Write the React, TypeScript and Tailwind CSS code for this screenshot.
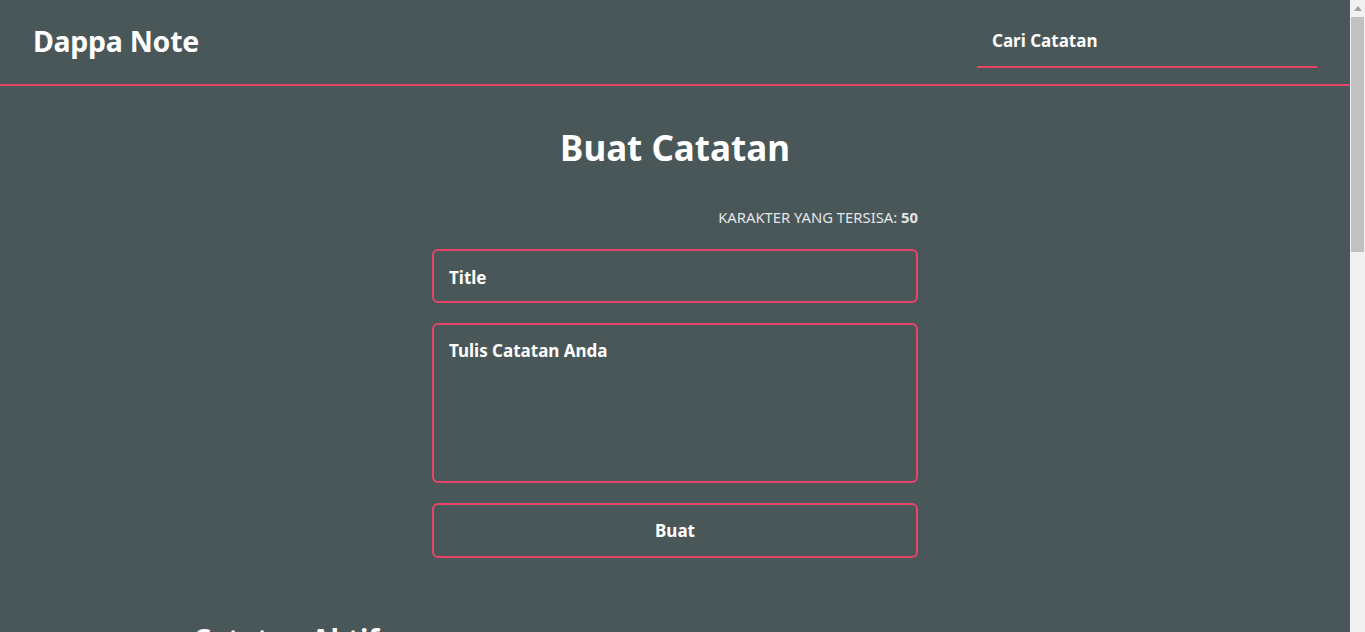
const notes = [
  { id: 1, title: "Babel", body: "Babel merupakan tools open-source yang digunakan untuk mengubah sintaks ECMAScript 2015+ menjadi sintaks yang didukung oleh JavaScript engine versi lama.", date: "Kamis, 14 April 2022" },
  { id: 2, title: "Functional Component", body: "Functional component merupakan React component yang dibuat menggunakan fungsi JavaScript.", date: "Kamis, 14 April 2022" },
  { id: 3, title: "Modularization", body: "Dalam konteks pemrograman JavaScript, modularization merupakan teknik dalam memecah atau menggunakan kode dalam berkas JavaScript secara terpisah berdasarkan tanggung jawabnya masing-masing.", date: "Kamis, 14 April 2022" },
];

function NoteItem({ title, body, date }: { title: string; body: string; date: string }) {
  return (
    <div className="flex flex-col rounded-md border-2 border-[#e9436a] p-4 text-white">
      <h3 className="text-lg font-bold">{title}</h3>
      <p className="text-sm text-[#cfd4d4]">{date}</p>
      <p className="mt-2 text-sm">{body}</p>
    </div>
  );
}

function Scrollbar() {
  return (
    <div className="flex w-[15px] shrink-0 flex-col items-center bg-[#f1f1f1]">
      <div className="flex h-[17px] items-center justify-center">
        <svg width="8" height="5" viewBox="0 0 8 5">
          <path d="M0 5 L4 0 L8 5 Z" fill="#a3a3a3" />
        </svg>
      </div>
      <div className="h-[235px] w-[13px] bg-[#c1c1c1]" />
    </div>
  );
}

export default function App() {
  return (
    <div className="flex h-screen overflow-hidden bg-[#4a5759] font-['Noto_Sans',sans-serif] text-white">
      <div className="min-w-0 flex-1">
        <header className="flex h-[86px] items-start justify-between border-b-2 border-[#e9436a] px-[33px]">
          <h1 className="mt-[20px] text-[28.5px] leading-[42px] font-bold tracking-[-0.01em]">Dappa Note</h1>
          <div className="mt-[28px] w-[340px] border-b-2 border-[#e9436a] pb-[12px] pl-[15px]">
            <span className="text-[17px] leading-[26px] font-bold">Cari Catatan</span>
          </div>
        </header>

        <main className="px-[193px]">
          <section className="mx-auto flex w-[486px] flex-col pt-[40px]">
            <h2 className="text-center text-[35px] leading-[44px] font-bold">Buat Catatan</h2>
            <p className="mt-[36px] text-right text-[14.8px] text-[#e3e6e6]">
              KARAKTER YANG TERSISA: <span className="font-bold">50</span>
            </p>
            <div className="mt-[21px] flex h-[54px] items-center rounded-md border-2 border-[#e9436a] px-[15px] pt-[3px]">
              <span className="text-[17px] font-bold">Title</span>
            </div>
            <div className="mt-[20px] h-[160px] rounded-md border-2 border-[#e9436a] px-[15px] pt-[13px]">
              <span className="text-[17px] font-bold">Tulis Catatan Anda</span>
            </div>
            <div className="mt-[20px] flex h-[55px] items-center justify-center rounded-md border-2 border-[#e9436a]">
              <span className="text-[17px] font-bold">Buat</span>
            </div>
          </section>

          <section className="pt-[60px] pb-[60px]">
            <h2 className="text-[28px] font-bold">Catatan Aktif</h2>
            <div className="mt-6 grid grid-cols-3 gap-4">
              {notes.map((n) => (
                <NoteItem key={n.id} title={n.title} body={n.body} date={n.date} />
              ))}
            </div>
            <h2 className="mt-16 text-[28px] font-bold">Arsip</h2>
            <p className="mt-6 text-center text-[#cfd4d4]">Tidak ada catatan</p>
          </section>
        </main>
      </div>
      <Scrollbar />
    </div>
  );
}
